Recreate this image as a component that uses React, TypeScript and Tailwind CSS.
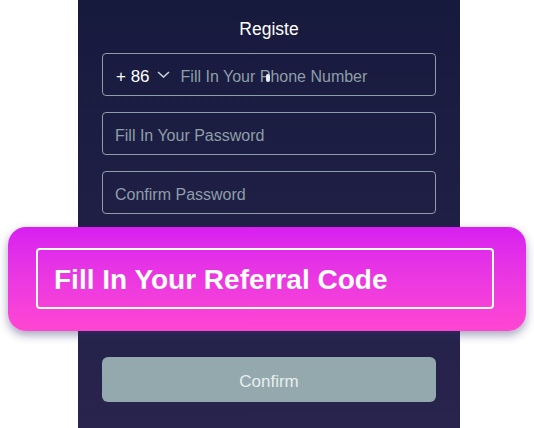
import React from "react";

const font = { fontFamily: '"Liberation Sans", Arial, Helvetica, sans-serif' };

function Field({ children }: { children: React.ReactNode }) {
  return (
    <div className="h-[43px] rounded-[4px] border-[1.5px] border-[#8c9fa6] flex items-center px-3 pt-[5px] text-[16px] text-[#8e9ea7]">
      {children}
    </div>
  );
}

export default function App() {
  return (
    <div className="relative w-[534px] h-[428px] bg-white overflow-hidden" style={font}>
      <div className="ml-[78px] w-[382px] h-[428px] bg-gradient-to-b from-[#161a3d] to-[#29244e] px-6 pt-4 flex flex-col">
        <div className="h-6 pt-[1px] text-center text-white text-[17.5px] leading-6">Registe</div>
        <div className="mt-[13px] flex flex-col gap-4">
          <div className="relative h-[43px] rounded-[4px] border-[1.5px] border-[#8c9fa6] flex items-center pl-[13px] pt-[5px] text-[16px]">
            <span className="text-white text-[17px]">+ 86</span>
            <svg className="ml-[7px] -mt-[5px]" width="13" height="7" viewBox="0 0 13 7" fill="none">
              <path d="M1 1 L6.5 6 L12 1" stroke="#c7d0d6" strokeWidth="1.6" />
            </svg>
            <span className="ml-[11px] text-[#8e9ea7]">Fill In Your Phone Number</span>
            <span className="absolute left-[163px] top-[20px] w-[4px] h-[8px] rounded-[2px] bg-[#e8ecef]" />
          </div>
          <Field>Fill In Your Password</Field>
          <Field>Confirm Password</Field>
          <Field>Fill In Your Referral Code</Field>
        </div>
        <button className="mt-[84px] h-[45px] pt-[4px] rounded-[6px] bg-[#93a9ad] text-[#e8eeee] text-[17px]">
          Confirm
        </button>
      </div>
      <div className="absolute left-[8px] top-[227px] w-[518px] h-[104px] rounded-[18px] bg-gradient-to-b from-[#d81ff0] to-[#ff46d2] shadow-[0_4px_10px_rgba(50,50,110,0.45)] pl-[28px] pt-[21px]">
        <div className="w-[458px] h-[61px] rounded-[4px] border-2 border-white flex items-center pl-[16px] pt-[2px] text-white font-bold text-[28px]">
          Fill In Your Referral Code
        </div>
      </div>
    </div>
  );
}
